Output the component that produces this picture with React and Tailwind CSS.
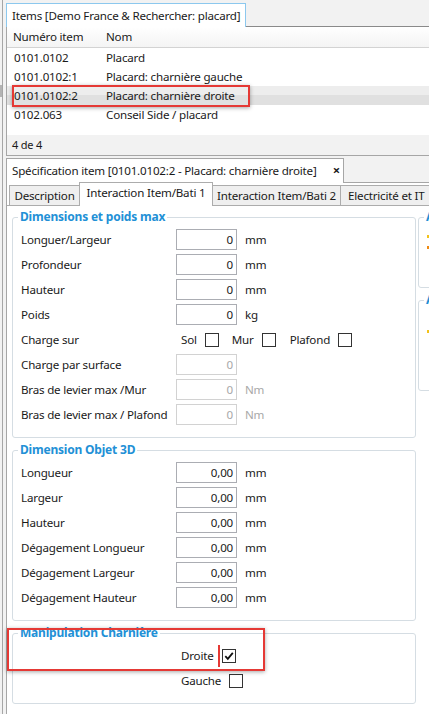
import React from 'react'

const dims = [
  { label: 'Longuer/Largeur', value: '0', unit: 'mm' },
  { label: 'Profondeur', value: '0', unit: 'mm' },
  { label: 'Hauteur', value: '0', unit: 'mm' },
  { label: 'Poids', value: '0', unit: 'kg' },
]

const disabledRows = [
  { label: 'Charge par surface', value: '0', unit: '' },
  { label: 'Bras de levier max /Mur', value: '0', unit: 'Nm' },
  { label: 'Bras de levier max / Plafond', value: '0', unit: 'Nm' },
]

const obj3d = ['Longueur', 'Largeur', 'Hauteur', 'Dégagement Longueur', 'Dégagement Largeur', 'Dégagement Hauteur']

const items = [
  ['0101.0102', 'Placard'],
  ['0101.0102:1', 'Placard: charnière gauche'],
  ['0101.0102:2', 'Placard: charnière droite'],
  ['0102.063', 'Conseil Side / placard'],
]

function Box({ value, disabled }) {
  return (
    <div className={'w-[61px] h-[21px] bg-white border flex items-center justify-end pr-[3px] ' + (disabled ? 'border-[#d2d2d2] text-[#a8a8a8]' : 'border-[#abadb3] text-[#1a1a1a]')}>
      {value}
    </div>
  )
}

function Check({ checked }) {
  return (
    <div className="w-[14px] h-[14px] border border-[#333] bg-white flex items-center justify-center">
      {checked && (
        <svg width="12" height="12" viewBox="0 0 12 12">
          <path d="M2.3 6.2 L4.8 8.8 L9.8 2.8" fill="none" stroke="#111" strokeWidth="1.8" />
        </svg>
      )}
    </div>
  )
}

function Field({ label, value, unit, disabled }) {
  return (
    <div className="flex items-center h-[25px]">
      <span className="w-[155px] shrink-0 whitespace-nowrap">{label}</span>
      <Box value={value} disabled={disabled} />
      <span className={'ml-[8px] ' + (disabled ? 'text-[#a8a8a8]' : '')}>{unit}</span>
    </div>
  )
}

function Group({ title, className, children }) {
  return (
    <fieldset className={'border border-[#d5dde3] rounded-[3px] px-0 ' + className}>
      <legend className="ml-[5px] px-[2px] text-[12px] leading-[16px] font-bold text-[#2290d6] whitespace-nowrap">{title}</legend>
      <div className="pl-[8px] pt-[2px] pb-[10px]">{children}</div>
    </fieldset>
  )
}

export default function App() {
  return (
    <div className="relative w-[429px] h-[714px] overflow-hidden bg-[#f2f2f2] flex text-[11.6px] tracking-[-0.2px] text-[#1a1a1a] font-['Noto_Sans','Liberation_Sans',sans-serif]">
      {/* left splitter */}
      <div className="w-[6px] shrink-0 flex">
        <div className="w-[2px] flex flex-col">
          <div className="h-[85px]" />
          <div className="h-[12px] bg-[#b4b4b4]" />
        </div>
        <div className="w-px bg-[#a6a6a6]" />
      </div>

      <div className="flex-1 min-w-0 flex flex-col pt-[3px]">
        {/* Items tab */}
        <div className="flex h-[24px] shrink-0">
          <div className="w-[240px] shrink-0 bg-white border-t border-l border-r border-[#8cc8ee] pl-[5px] flex items-center whitespace-nowrap">
            Items [Demo France &amp; Rechercher: placard]
          </div>
          <div className="flex-1 border-b border-[#8a8a8a]" />
        </div>

        <div className="border-l border-[#a6a6a6] bg-white flex flex-col shrink-0">
          <div className="h-[21px] flex items-center pl-[6px] border-b border-[#d3d3d3] bg-gradient-to-b from-white to-[#f4f4f4]">
            <span className="w-[93px] shrink-0">Numéro item</span>
            <span>Nom</span>
          </div>
          {items.map((r, i) => (
            <div key={r[0]} className={'h-[19px] flex items-center pl-[7px] whitespace-nowrap ' + (i === 2 ? 'bg-[linear-gradient(#ededed_50%,#e0e0e0_50%)]' : '')}>
              <span className="w-[92px] shrink-0">{r[0]}</span>
              <span>{r[1]}</span>
            </div>
          ))}
          <div className="h-[11px]" />
          <div className="h-[21px] bg-[#f2f2f2] border-b border-[#a6a6a6] flex items-center pl-[5px] text-[11px]">4 de 4</div>
        </div>

        <div className="h-[2px] shrink-0" />

        {/* Spécification tab */}
        <div className="flex h-[25px] shrink-0">
          <div className="w-[338px] shrink-0 bg-white border-t border-l border-r border-[#a6a6a6] pl-[5px] pr-[3px] flex items-center justify-between whitespace-nowrap">
            <span>Spécification item [0101.0102:2 - Placard: charnière droite]</span>
            <span className="font-bold text-[13px]">×</span>
          </div>
          <div className="flex-1 border-b border-[#a6a6a6]" />
        </div>

        <div className="flex-1 bg-white border-l border-[#a6a6a6] flex flex-col">
          {/* sub tabs */}
          <div className="h-[23px] shrink-0 flex items-end pl-[2px] border-b border-[#acacac] whitespace-nowrap">
            <div className="w-[70px] h-[20px] shrink-0 bg-[#efefef] border-t border-l border-[#acacac] flex items-center justify-center">Description</div>
            <div className="w-[134px] h-[24px] -mb-px shrink-0 bg-white border-t border-l border-r border-[#acacac] flex items-center justify-center pb-[3px]">Interaction Item/Bati 1</div>
            <div className="w-[128px] h-[20px] shrink-0 bg-[#efefef] border-t border-r border-[#acacac] flex items-center justify-center">Interaction Item/Bati 2</div>
            <div className="w-[100px] h-[20px] shrink-0 bg-[#efefef] border-t border-r border-[#acacac] flex items-center pl-[7px]">Electricité et IT</div>
          </div>

          <div className="flex gap-[2px] pl-[5px] pt-[3px]">
            <div className="w-[404px] shrink-0 flex flex-col">
              <Group title="Dimensions et poids max">
                {dims.map(d => <Field key={d.label} {...d} />)}
                <div className="flex items-center h-[25px]">
                  <span className="w-[160px] shrink-0">Charge sur</span>
                  <span>Sol</span>
                  <div className="ml-[8px]"><Check /></div>
                  <span className="ml-[13px]">Mur</span>
                  <div className="ml-[8px]"><Check /></div>
                  <span className="ml-[14px]">Plafond</span>
                  <div className="ml-[8px]"><Check /></div>
                </div>
                {disabledRows.map(d => <Field key={d.label} {...d} disabled />)}
              </Group>

              <Group title="Dimension Objet 3D" className="mt-[4px]">
                {obj3d.map(l => <Field key={l} label={l} value="0,00" unit="mm" />)}
              </Group>

              <Group title="Manipulation Charnière" className="mt-[4px]">
                <div className="pl-[160px]">
                  <div className="flex items-center h-[25px]">
                    <span>Droite</span>
                    <div className="ml-[8px]"><Check checked /></div>
                  </div>
                  <div className="flex items-center h-[25px]">
                    <span>Gauche</span>
                    <div className="ml-[8px]"><Check /></div>
                  </div>
                </div>
              </Group>
            </div>

            <div className="w-[150px] shrink-0 flex flex-col">
              <Group title="Affichage">
                <div className="h-[50px] flex flex-col gap-[8px] pt-[8px]">
                  <span className="w-[6px] h-[3px] bg-[#f2c21b]" />
                  <span className="w-[6px] h-[3px] bg-[#ef8a12]" />
                </div>
              </Group>
              <Group title="Autres" className="mt-[4px]">
                <div className="h-[70px] pt-[20px]">
                  <span className="block w-[6px] h-[3px] bg-[#f2c21b]" />
                </div>
              </Group>
            </div>
          </div>
        </div>
      </div>

      {/* annotations */}
      <div className="absolute left-[12px] top-[85px] w-[238px] h-[22px] border-2 border-[#e53935] shadow-[0_1px_4px_rgba(0,0,0,0.35)]" />
      <div className="absolute left-[7px] top-[628px] w-[258px] h-[43px] border-2 border-[#e53935] shadow-[0_1px_4px_rgba(0,0,0,0.35)]" />
      <div className="absolute left-[218px] top-[645px] w-[2px] h-[22px] bg-[#e53935]" />
    </div>
  )
}
